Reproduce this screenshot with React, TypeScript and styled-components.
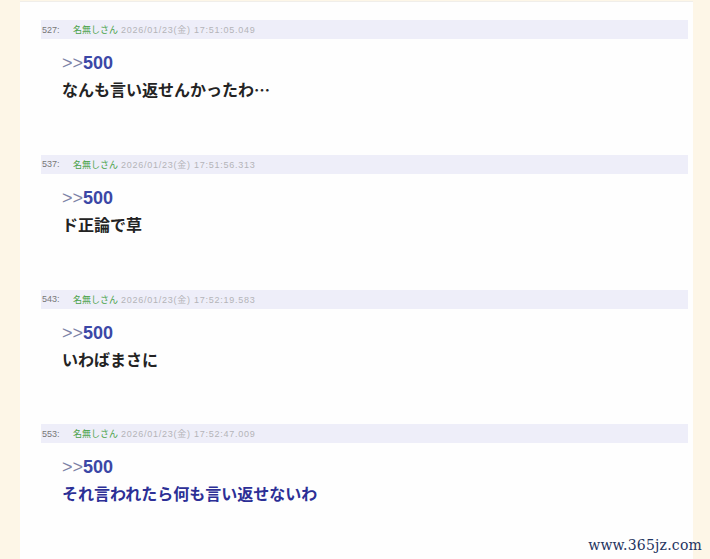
import styled, { createGlobalStyle } from "styled-components";

const GlobalStyle = createGlobalStyle`
  html, body {
    margin: 0;
    padding: 0;
    background: #fdf6e7;
  }
  body {
    font-family: "Liberation Sans", "Noto Sans CJK JP", sans-serif;
  }
`;

interface Post {
  no: number;
  date: string;
  text: string;
  blue?: boolean;
}

const posts: Post[] = [
  { no: 527, date: "2026/01/23(金) 17:51:05.049", text: "なんも言い返せんかったわ…" },
  { no: 537, date: "2026/01/23(金) 17:51:56.313", text: "ド正論で草" },
  { no: 543, date: "2026/01/23(金) 17:52:19.583", text: "いわばまさに" },
  { no: 553, date: "2026/01/23(金) 17:52:47.009", text: "それ言われたら何も言い返せないわ", blue: true },
];

export default function App() {
  return (
    <>
      <GlobalStyle />
      <Page>
        <Panel>
          {posts.map((p) => (
            <PostBlock key={p.no}>
              <Header>
                <Num>{p.no}:</Num>
                <Name>名無しさん</Name>
                <Date>{p.date}</Date>
              </Header>
              <Body>
                <Anchor>
                  <Arrows>&gt;&gt;</Arrows>500
                </Anchor>
                <Message $blue={p.blue}>{p.text}</Message>
              </Body>
            </PostBlock>
          ))}
        </Panel>
        <Watermark>www.365jz.com</Watermark>
      </Page>
    </>
  );
}

const Page = styled.div`
  position: relative;
  width: 710px;
  height: 559px;
  overflow: hidden;
  display: flex;
`;

const Panel = styled.div`
  margin: 1px 17px 0 20px;
  flex: 1;
  background: #fefefe;
  border-top: 1px solid #f0eeea;
  padding: 18px 5px 0 21px;
  display: flex;
  flex-direction: column;
`;

const PostBlock = styled.div`
  height: 135px;
  display: flex;
  flex-direction: column;
`;

const Header = styled.div`
  height: 19px;
  background: #eeeef9;
  display: flex;
  align-items: center;
  gap: 9px;
  padding-left: 1px;
  font-size: 9px;
  color: #8a8a8a;
`;

const Num = styled.span`
  color: #777;
  width: 22px;
`;

const Name = styled.span`
  color: #4aa24a;
  font-family: "Noto Sans CJK JP", sans-serif;
  margin-right: -6px;
`;

const Date = styled.span`
  color: #b4b4b8;
  letter-spacing: 0.75px;
`;

const Body = styled.div`
  padding: 12px 0 0 21px;
  display: flex;
  flex-direction: column;
  gap: 2px;
`;

const Anchor = styled.div`
  font-size: 18px;
  line-height: 24px;
  font-weight: bold;
  color: #3b47a6;
`;

const Arrows = styled.span`
  font-weight: normal;
  color: #7d82a6;
`;

const Message = styled.div<{ $blue?: boolean }>`
  font-family: "Noto Sans CJK JP", sans-serif;
  font-size: 16px;
  line-height: 24px;
  font-weight: bold;
  color: ${(p) => (p.$blue ? "#2c2f96" : "#232323")};
`;

const Watermark = styled.div`
  position: absolute;
  right: 8px;
  bottom: 6px;
  font-family: "DejaVu Serif", serif;
  font-size: 14px;
  color: #1e3360;
  letter-spacing: 0.2px;
`;
